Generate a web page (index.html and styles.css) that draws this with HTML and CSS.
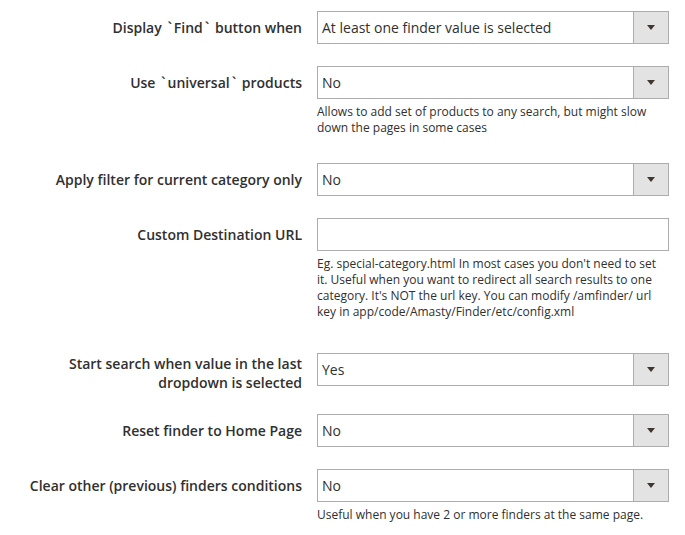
FILE: index.html
```html
<!DOCTYPE html>
<html lang="en">
<head>
<meta charset="utf-8">
<title>Finder settings</title>
<link rel="stylesheet" href="styles.css">
</head>
<body>
<form class="config">
  <div class="row">
    <label class="label">Display <span class="tick">`</span>Find<span class="tick">`</span> button when</label>
    <div class="control">
      <div class="select"><span class="value">At least one finder value is selected</span><span class="arrow"><i class="tri"></i></span></div>
    </div>
  </div>
  <div class="row row--note">
    <label class="label">Use <span class="tick">`</span>universal<span class="tick">`</span> products</label>
    <div class="control">
      <div class="select"><span class="value">No</span><span class="arrow"><i class="tri"></i></span></div>
      <p class="note">Allows to add set of products to any search, but might slow down the pages in some cases</p>
    </div>
  </div>
  <div class="row">
    <label class="label">Apply filter for current category only</label>
    <div class="control">
      <div class="select"><span class="value">No</span><span class="arrow"><i class="tri"></i></span></div>
    </div>
  </div>
  <div class="row row--note row--note-long">
    <label class="label">Custom Destination URL</label>
    <div class="control">
      <input class="input" type="text" value="">
      <p class="note">Eg. special-category.html In most cases you don't need to set it. Useful when you want to redirect all search results to one category. It's NOT the url key. You can modify /amfinder/ url key in app/code/Amasty/Finder/etc/config.xml</p>
    </div>
  </div>
  <div class="row">
    <label class="label label--multi">Start search when value in the last dropdown is selected</label>
    <div class="control">
      <div class="select"><span class="value">Yes</span><span class="arrow"><i class="tri"></i></span></div>
    </div>
  </div>
  <div class="row">
    <label class="label">Reset finder to Home Page</label>
    <div class="control">
      <div class="select"><span class="value">No</span><span class="arrow"><i class="tri"></i></span></div>
    </div>
  </div>
  <div class="row row--note">
    <label class="label">Clear other (previous) finders conditions</label>
    <div class="control">
      <div class="select"><span class="value">No</span><span class="arrow"><i class="tri"></i></span></div>
      <p class="note">Useful when you have 2 or more finders at the same page.</p>
    </div>
  </div>
</form>
</body>
</html>
```
FILE: styles.css
```css
* { box-sizing: border-box; }
html, body { margin: 0; padding: 0; background: #fff; }
body {
  font-family: "Open Sans", "Noto Sans", sans-serif;
  color: #303030;
  font-size: 14px;
}
.config {
  display: flex;
  flex-direction: column;
  padding: 11px 16px 0 17px;
}
.row {
  display: grid;
  grid-template-columns: 285px 352px;
  column-gap: 15px;
  align-items: start;
  margin-bottom: 22px;
}
.row--note { margin-bottom: 27px; }
.row--note-long { margin-bottom: 33px; }
.label {
  text-align: right;
  font-weight: 600;
  font-size: 14px;
  line-height: 33px;
}
.tick { padding: 0 2px; }
.label--multi {
  line-height: 19px;
  padding-top: 1px;
}
.control { display: flex; flex-direction: column; }
.select {
  display: flex;
  height: 33px;
  border: 1px solid #adadad;
  background: #fff;
}
.value {
  flex: 1;
  padding-left: 4px;
  line-height: 31px;
  font-size: 14px;
  white-space: nowrap;
}
.arrow {
  width: 35px;
  border-left: 1px solid #adadad;
  background: #e3e3e3;
  display: flex;
  align-items: center;
  justify-content: center;
}
.tri {
  display: block;
  width: 0;
  height: 0;
  border-left: 4px solid transparent;
  border-right: 4px solid transparent;
  border-top: 5px solid #41362f;
}
.input {
  display: block;
  width: 100%;
  height: 33px;
  border: 1px solid #adadad;
  background: #fff;
  margin: 0;
  padding: 0 4px;
  font: inherit;
}
.note {
  margin: 5px 0 0;
  font-size: 12px;
  line-height: 16px;
  color: #303030;
}
```
